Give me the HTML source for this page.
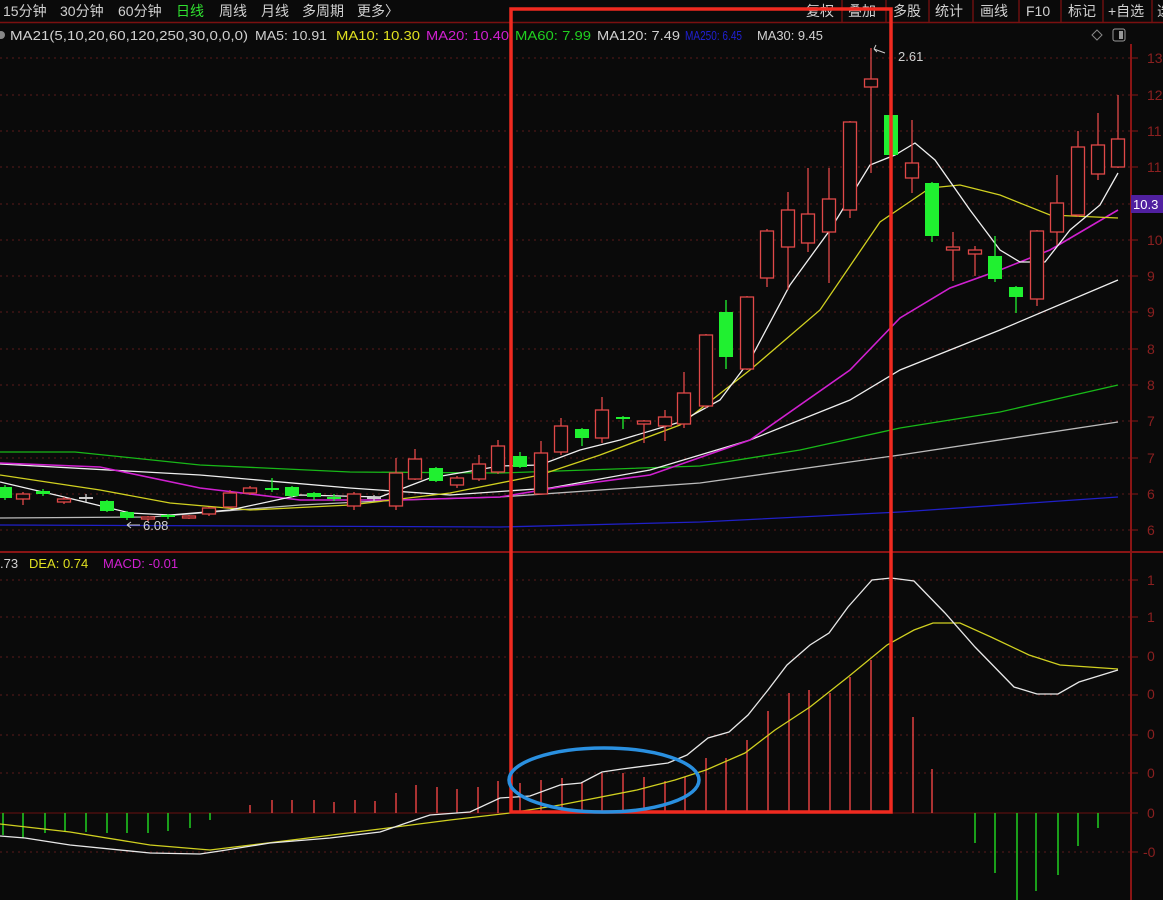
<!DOCTYPE html>
<html><head><meta charset="utf-8"><style>
html,body{margin:0;padding:0;background:#0a0a0a;width:1163px;height:900px;overflow:hidden}
svg{display:block}
text{font-family:"Liberation Sans","Noto Sans CJK SC",sans-serif}
</style></head><body>
<svg id="s" width="1163" height="900" xmlns="http://www.w3.org/2000/svg">
<rect width="1163" height="900" fill="#0a0a0a"/>
<line x1="0" y1="22.5" x2="1163" y2="22.5" stroke="#7a1010" stroke-width="1.5"/>
<line x1="0" y1="552" x2="1163" y2="552" stroke="#8a1515" stroke-width="2"/>
<line x1="1131" y1="44" x2="1131" y2="900" stroke="#8a1515" stroke-width="2"/>
<line x1="0" y1="813" x2="1131" y2="813" stroke="#6a1010" stroke-width="1"/>
<g id="grid" stroke="#5a1a1a" stroke-width="1" stroke-dasharray="2,4"></g>
<g font-size="14" fill="#d0d0d0">
<text x="3" y="16">15分钟</text><text x="60" y="16">30分钟</text><text x="118" y="16">60分钟</text>
<text x="176" y="16" fill="#30e030">日线</text><text x="219" y="16">周线</text><text x="261" y="16">月线</text>
<text x="302" y="16">多周期</text><text x="357" y="16">更多〉</text>
<text x="806" y="16">复权</text><text x="848" y="16">叠加</text><text x="893" y="16">多股</text><text x="935" y="16">统计</text>
<text x="980" y="16">画线</text><text x="1026" y="16">F10</text><text x="1068" y="16">标记</text><text x="1108" y="16">+自选</text><text x="1157" y="16">选</text>
</g>
<g stroke="#6a1010" stroke-width="1.5">
<line x1="842" y1="0" x2="842" y2="22"/><line x1="886" y1="0" x2="886" y2="22"/><line x1="929" y1="0" x2="929" y2="22"/><line x1="973" y1="0" x2="973" y2="22"/><line x1="1019" y1="0" x2="1019" y2="22"/><line x1="1061" y1="0" x2="1061" y2="22"/><line x1="1103" y1="0" x2="1103" y2="22"/><line x1="1152" y1="0" x2="1152" y2="22"/>
</g>
<circle cx="1" cy="35" r="4" fill="#888"/>
<g font-size="13">
<text x="10" y="40" fill="#d0d0d0" textLength="238" lengthAdjust="spacingAndGlyphs">MA21(5,10,20,60,120,250,30,0,0,0)</text>
<text x="255" y="40" fill="#d0d0d0" textLength="72" lengthAdjust="spacingAndGlyphs">MA5: 10.91</text>
<text x="336" y="40" fill="#e0e020" textLength="84" lengthAdjust="spacingAndGlyphs">MA10: 10.30</text>
<text x="426" y="40" fill="#d020d0" textLength="83" lengthAdjust="spacingAndGlyphs">MA20: 10.40</text>
<text x="515" y="40" fill="#20d020" textLength="76" lengthAdjust="spacingAndGlyphs">MA60: 7.99</text>
<text x="597" y="40" fill="#d0d0d0" textLength="83" lengthAdjust="spacingAndGlyphs">MA120: 7.49</text>
<text x="685" y="40" fill="#2020d0" textLength="57" lengthAdjust="spacingAndGlyphs">MA250: 6.45</text>
<text x="757" y="40" fill="#d0d0d0" textLength="66" lengthAdjust="spacingAndGlyphs">MA30: 9.45</text>
<text x="0" y="568" fill="#d0d0d0">.73</text>
<text x="29" y="568" fill="#e0e020">DEA: 0.74</text>
<text x="103" y="568" fill="#d020d0">MACD: -0.01</text>
</g>
<path d="M1097 30 l5 5 -5 5 -5 -5z" fill="none" stroke="#888"/>
<rect x="1113" y="29" width="12" height="12" rx="2" fill="none" stroke="#999"/><rect x="1119" y="31" width="4" height="8" fill="#999"/>
<g font-size="14" fill="#8a2020">
<text x="1147" y="63">13</text><text x="1147" y="100">12</text><text x="1147" y="136">11</text><text x="1147" y="172">11</text>
<text x="1147" y="245">10</text><text x="1147" y="281">9</text><text x="1147" y="317">9</text><text x="1147" y="354">8</text>
<text x="1147" y="390">8</text><text x="1147" y="426">7</text><text x="1147" y="463">7</text><text x="1147" y="499">6</text><text x="1147" y="535">6</text>
<text x="1147" y="585">1</text><text x="1147" y="622">1</text><text x="1147" y="661">0</text><text x="1147" y="699">0</text>
<text x="1147" y="739">0</text><text x="1147" y="778">0</text><text x="1147" y="818">0</text><text x="1143" y="857">-0</text>
</g>
<rect x="1131" y="195" width="32" height="18" fill="#5020a0"/>
<text x="1133" y="209" font-size="13" fill="#fff">10.3</text>
<g id="ma" fill="none" stroke-width="1.3"></g>
<g id="c"></g>
<g id="m"></g>
<text x="143" y="530" font-size="13" fill="#d0d0d0">6.08</text>
<path d="M140 525 H127 M127 525 l4 -3 M127 525 l4 3" stroke="#ccc" fill="none"/>
<text x="898" y="61" font-size="13" fill="#d0d0d0">2.61</text>
<path d="M885 53 L874 49 M874 49 l2 -4 M874 49 l3 3" stroke="#ccc" fill="none"/>
<rect x="511" y="9" width="380" height="803" fill="none" stroke="#f02a20" stroke-width="3.5"/>
<ellipse cx="604" cy="780" rx="95" ry="32" fill="none" stroke="#2a90e0" stroke-width="3.5"/>
</svg>
<script>
var NS="http://www.w3.org/2000/svg";
function el(p,t,a){var e=document.createElementNS(NS,t);for(var k in a)e.setAttribute(k,a[k]);p.appendChild(e);return e;}
var g=document.getElementById('grid');
[58,95,131,167,204,240,276,312,349,385,421,458,494,530,580,617,657,695,735,773,852].forEach(function(y){el(g,'line',{x1:0,y1:y,x2:1131,y2:y});});
[58,95,131,167,204,240,276,312,349,385,421,458,494,530,580,617,657,695,735,773,813,852].forEach(function(y){el(g,'line',{x1:1131,y1:y,x2:1138,y2:y,'stroke-dasharray':'none',stroke:'#8a1515'});});
var ma=document.getElementById('ma');
function pl(c,pts,w){el(ma,'polyline',{points:pts,stroke:c,'stroke-width':w||1.3});}
pl('#18b818','0,452 75,452 200,465 350,472 500,473 700,466 800,450 900,428 1000,412 1118,385');
pl('#2020c8','0,525 500,527 700,522 900,512 1118,497');
pl('#bbbbbb','0,518 150,517 300,505 400,500 500,497 700,483 900,455 1118,422');
pl('#eeeeee','0,464 200,475 350,488 450,495 550,488 650,470 750,440 850,400 900,370 1000,330 1118,280');
pl('#d020d0','0,463 100,467 200,488 300,500 400,500 500,497 560,487 650,475 750,440 850,370 900,318 950,288 1000,270 1050,250 1118,210',1.6);
pl('#d0d020','0,475 100,490 170,503 250,510 350,505 450,493 540,475 600,455 680,425 750,370 820,310 880,222 930,188 960,185 1000,195 1050,215 1118,218');
pl('#f0f0f0','0,482 60,496 130,513 170,515 230,510 300,495 380,497 430,478 500,466 540,465 580,450 620,440 680,422 720,400 750,360 790,285 830,230 870,165 895,155 915,143 935,160 970,210 1000,250 1020,262 1045,262 1070,230 1100,205 1118,173');
var C=[[5,487,498,485,500,'g'],[23,494,499,492,505,'r'],[43,491,494,489,496,'g'],[64,499,502,497,504,'r'],[86,497,499,494,502,'w'],[107,501,511,500,512,'g'],[127,512,518,511,520,'g'],[148,517,519,516,521,'r'],[168,515,517,514,519,'g'],[189,516,518,515,519,'r'],[209,508,514,507,516,'r'],[230,493,507,490,508,'r'],[250,488,493,486,495,'r'],[272,488,490,478,492,'g'],[292,487,496,486,497,'g'],[314,493,497,492,500,'g'],[334,497,499,494,501,'g'],[354,494,506,492,510,'r'],[374,497,499,495,501,'w'],[396,473,506,458,510,'r'],[415,459,479,449,480,'r'],[436,468,481,467,482,'g'],[457,478,485,476,488,'r'],[479,464,479,455,481,'r'],[498,446,472,440,474,'r'],[520,456,467,452,468,'g'],[541,453,494,441,495,'r'],[561,426,452,418,455,'r'],[582,429,438,428,446,'g'],[602,410,438,397,443,'r'],[623,417,419,416,429,'g'],[644,421,424,420,443,'r'],[665,417,426,410,441,'r'],[684,393,424,372,428,'r'],[706,335,406,334,408,'r'],[726,312,357,300,369,'g'],[747,297,369,296,370,'r'],[767,231,278,229,287,'r'],[788,210,247,192,290,'r'],[808,214,243,168,252,'r'],[829,199,232,168,283,'r'],[850,122,210,121,218,'r'],[871,79,87,48,173,'r'],[891,115,155,115,155,'g'],[912,163,178,120,193,'r'],[932,183,236,182,242,'g'],[953,247,250,232,281,'r'],[975,250,254,246,276,'r'],[995,256,279,236,282,'g'],[1016,287,297,286,313,'g'],[1037,231,299,230,306,'r'],[1057,203,232,175,245,'r'],[1078,147,215,131,217,'r'],[1098,145,174,113,180,'r'],[1118,139,167,95,168,'r']];
var cg=document.getElementById('c');
C.forEach(function(d){var x=d[0],col=d[5]=='g'?'#20f030':(d[5]=='w'?'#cccccc':'#e04848');
el(cg,'line',{x1:x,y1:d[3],x2:x,y2:d[1],stroke:col,'stroke-width':1.3});
el(cg,'line',{x1:x,y1:d[2],x2:x,y2:d[4],stroke:col,'stroke-width':1.3});
var h=Math.max(d[2]-d[1],1.5);
if(d[5]=='g'||d[5]=='w')el(cg,'rect',{x:x-7,y:d[1],width:14,height:h,fill:col});
else el(cg,'rect',{x:x-6.5,y:d[1],width:13,height:h,fill:'#0a0a0a',stroke:col,'stroke-width':1.3});});
var m=document.getElementById('m');
[[3,835],[23,838],[45,833],[65,832],[86,832],[107,833],[127,833],[148,833],[168,831],[190,828],[210,820]].forEach(function(b){el(m,'line',{x1:b[0],y1:813,x2:b[0],y2:b[1],stroke:'#20d020','stroke-width':1.5});});
[[250,805],[272,800],[292,800],[314,800],[334,802],[355,800],[375,801],[396,793],[416,785],[437,787],[457,789],[478,787],[498,781],[520,783],[541,780],[562,778],[582,782],[602,773],[623,773],[644,777],[665,781],[685,777],[706,758],[726,758],[747,740],[768,711],[789,693],[809,690],[830,693],[850,677],[871,660],[913,717],[932,769]].forEach(function(b){el(m,'line',{x1:b[0],y1:813,x2:b[0],y2:b[1],stroke:'#e04040','stroke-width':1.5});});
[[975,843],[995,873],[1017,900],[1036,891],[1058,875],[1078,846],[1098,828]].forEach(function(b){el(m,'line',{x1:b[0],y1:813,x2:b[0],y2:b[1],stroke:'#20d020','stroke-width':1.5});});
el(m,'polyline',{fill:'none',stroke:'#d0d020','stroke-width':1.3,points:'0,824 70,832 150,845 210,850 300,839 380,829 450,820 510,813 560,805 637,790 675,780 706,770 745,753 775,730 810,707 848,677 887,645 914,630 933,623 960,623 991,637 1029,655 1060,665 1118,669'});
el(m,'polyline',{fill:'none',stroke:'#e8e8e8','stroke-width':1.3,points:'0,836 25,838 70,845 150,853 200,854 220,851 270,843 330,838 380,832 415,820 430,815 470,812 500,798 530,796 560,785 581,783 602,772 622,769 668,763 687,755 708,738 729,732 748,715 768,690 787,665 810,645 829,633 848,607 872,580 891,578 914,581 945,613 975,647 1014,687 1037,694 1058,694 1079,682 1118,670'});
</script>
</body></html>
